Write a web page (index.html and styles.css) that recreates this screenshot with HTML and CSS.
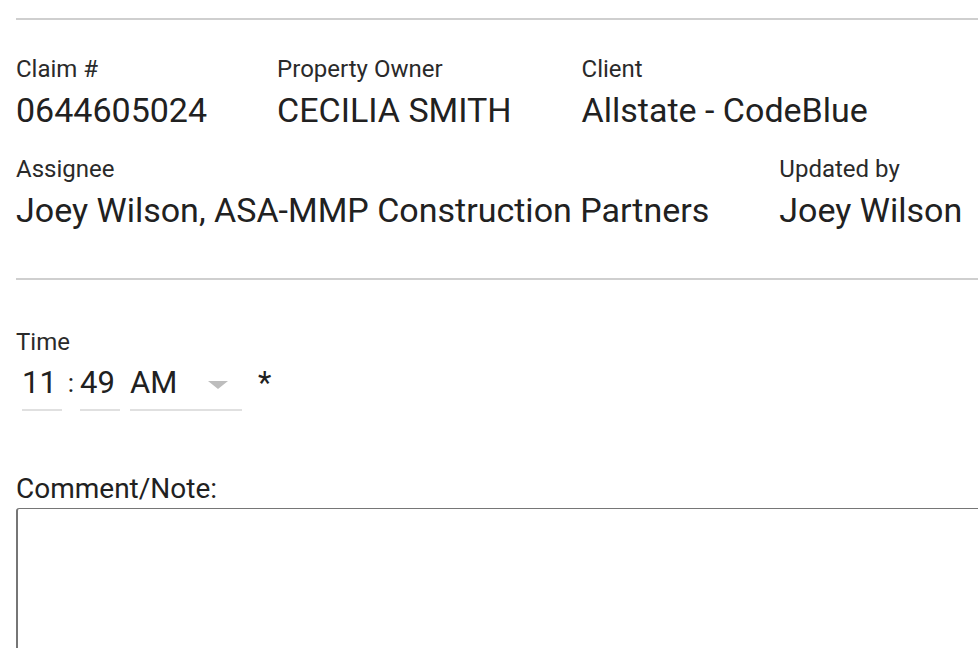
FILE: index.html
```html
<!DOCTYPE html>
<html lang="en">
<head>
<meta charset="utf-8">
<title>Claim note</title>
<link rel="stylesheet" href="styles.css">
</head>
<body>
<div class="page">
  <div class="rule"></div>
  <div class="info-row first">
    <div class="field">
      <div class="label">Claim #</div>
      <div class="value">0644605024</div>
    </div>
    <div class="field">
      <div class="label">Property Owner</div>
      <div class="value">CECILIA SMITH</div>
    </div>
    <div class="field">
      <div class="label">Client</div>
      <div class="value">Allstate - CodeBlue</div>
    </div>
  </div>
  <div class="info-row">
    <div class="field">
      <div class="label">Assignee</div>
      <div class="value">Joey Wilson, ASA-MMP Construction Partners</div>
    </div>
    <div class="field">
      <div class="label">Updated by</div>
      <div class="value">Joey Wilson</div>
    </div>
  </div>
  <div class="rule second"></div>
  <div class="time-field">
    <div class="label">Time</div>
    <div class="time-inputs">
      <span class="tbox num">11</span>
      <span class="colon">:</span>
      <span class="tbox num">49</span>
      <span class="tbox ampm">AM<span class="caret"></span></span>
      <span class="req">*</span>
    </div>
  </div>
  <div class="comment">
    <div class="comment-label">Comment/Note:</div>
    <div class="textarea"></div>
  </div>
</div>
</body>
</html>
```

FILE: styles.css
```css
html, body {
  margin: 0;
  padding: 0;
  background: #fff;
  overflow: hidden;
}
body {
  font-family: Roboto, "Liberation Sans", sans-serif;
  color: #212121;
}
.page {
  padding: 18px 0 0 16px;
  width: 1100px;
}
.rule {
  height: 2px;
  background: #cfcfcf;
}
.rule.second {
  margin-top: 48px;
}
.info-row {
  display: flex;
  gap: 70px;
  margin-top: 27px;
}
.info-row.first {
  margin-top: 37px;
}
.label {
  font-size: 24px;
  line-height: 25px;
  color: #2a2a2a;
}
.value {
  font-size: 34px;
  line-height: 40px;
  margin-top: 8px;
  color: #212121;
  white-space: nowrap;
}
.time-field {
  margin-top: 50px;
}
.time-inputs {
  display: flex;
  align-items: flex-start;
  margin-top: 10px;
  font-size: 31px;
  line-height: 36px;
}
.tbox {
  display: block;
  height: 36px;
  padding-bottom: 8px;
  border-bottom: 2px solid #e0e0e0;
  position: relative;
}
.num {
  width: 40px;
}
.num:first-child {
  margin-left: 6px;
}
.colon {
  width: 18px;
  text-align: center;
  font-size: 26px;
}
.ampm {
  width: 112px;
  margin-left: 10px;
}
.caret {
  position: absolute;
  left: 78px;
  top: 16px;
  width: 0;
  height: 0;
  border-left: 10px solid transparent;
  border-right: 10px solid transparent;
  border-top: 8px solid #bdbdbd;
}
.req {
  margin-left: 16px;
}
.comment {
  margin-top: 63px;
}
.comment-label {
  font-size: 28px;
  line-height: 30px;
  color: #212121;
}
.textarea {
  margin-top: 4px;
  height: 160px;
  border: 1px solid #767676;
  border-left-width: 2px;
  border-radius: 3px;
}
```
